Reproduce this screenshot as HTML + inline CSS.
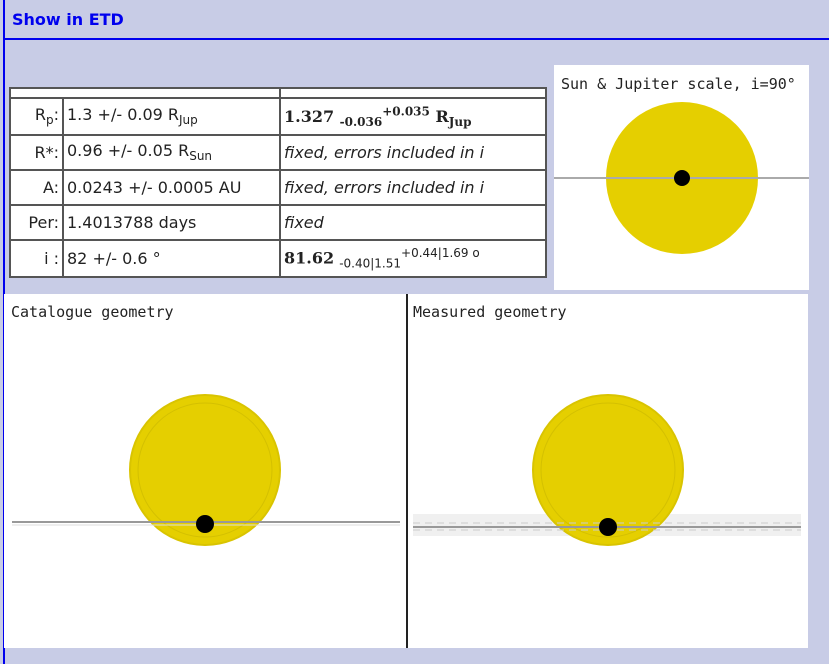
<!DOCTYPE html>
<html><head><style>
body{margin:0;width:829px;height:664px;background:#c8cce6;position:relative;overflow:hidden;font-family:"DejaVu Sans","Liberation Sans",sans-serif;}
.hdr{position:absolute;left:3px;top:0;width:826px;height:38px;border-bottom:2px solid #0000ee;}
.hdr span{position:absolute;left:9px;top:10px;color:#0000ee;font-weight:bold;font-size:16px;}
.lb{position:absolute;left:3px;top:0;width:2px;height:664px;background:#0000ee;}
table{position:absolute;left:9px;top:87px;border-collapse:collapse;border:2px solid #555;font-size:16px;color:#222;background:#fff;}
td{border:2px solid #555;padding:0 3px;height:33px;white-space:nowrap;background:#fff;}
tr.h td{height:8px;padding:0;}
td.l{text-align:right;width:45px;}
td.m{width:209px;}
td.r{width:258px;}
sub,sup{font-size:12px;}
.b{font-weight:bold;font-family:"DejaVu Serif","Liberation Serif",serif;font-size:16px;}
</style></head><body>
<div class="hdr"><span>Show in ETD</span></div>
<div class="lb"></div>
<table>
<tr class="h"><td colspan="2"></td><td></td></tr>
<tr style="height:37px"><td class="l">R<sub>p</sub>:</td><td class="m">1.3 +/- 0.09 R<sub>Jup</sub></td><td class="r"><span class="b">1.327 <sub>-0.036</sub><sup>+0.035</sup> R<sub>Jup</sub></span></td></tr>
<tr><td class="l">R*:</td><td class="m">0.96 +/- 0.05 R<sub>Sun</sub></td><td class="r"><i>fixed, errors included in i</i></td></tr>
<tr style="height:30px"><td class="l" style="height:28px">A:</td><td class="m">0.0243 +/- 0.0005 AU</td><td class="r"><i>fixed, errors included in i</i></td></tr>
<tr><td class="l" style="height:28px">Per:</td><td class="m">1.4013788 days</td><td class="r"><i>fixed</i></td></tr>
<tr><td class="l" style="height:35px">i :</td><td class="m">82 +/- 0.6 °</td><td class="r"><span class="b">81.62</span> <sub>-0.40|1.51</sub><sup>+0.44|1.69 o</sup></td></tr>
</table>
<svg style="position:absolute;left:554px;top:65px" width="255" height="225">
<rect width="255" height="225" fill="#fff"/>
<text x="7" y="24" font-family="DejaVu Sans Mono" font-size="15" fill="#222">Sun &amp; Jupiter scale, i=90°</text>
<circle cx="128" cy="113" r="76" fill="#e5cf00"/>
<line x1="0" y1="113" x2="255" y2="113" stroke="#aaa" stroke-width="2"/>
<circle cx="128" cy="113" r="8" fill="#000"/>
</svg>
<svg style="position:absolute;left:4px;top:294px" width="804" height="354">
<rect width="804" height="354" fill="#fff"/>
<rect x="402" y="0" width="2" height="354" fill="#222"/>
<text x="7" y="23" font-family="DejaVu Sans Mono" font-size="15" fill="#222">Catalogue geometry</text>
<text x="409" y="23" font-family="DejaVu Sans Mono" font-size="15" fill="#222">Measured geometry</text>
<circle cx="201" cy="176" r="75" fill="#e5cf00" stroke="#d9c400" stroke-width="2"/>
<circle cx="201" cy="176" r="67" fill="none" stroke="#d4c000" stroke-width="1"/>
<line x1="8" y1="228" x2="396" y2="228" stroke="#999" stroke-width="2"/>
<line x1="8" y1="231" x2="396" y2="231" stroke="#ddd" stroke-width="1"/>
<circle cx="201" cy="230" r="9" fill="#000"/>
<rect x="409" y="220" width="388" height="22" fill="#f0f0f0"/>
<circle cx="604" cy="176" r="75" fill="#e5cf00" stroke="#d9c400" stroke-width="2"/>
<circle cx="604" cy="176" r="67" fill="none" stroke="#d4c000" stroke-width="1"/>
<line x1="409" y1="229" x2="797" y2="229" stroke="#ccc" stroke-width="1" stroke-dasharray="7,5"/>
<line x1="409" y1="233" x2="797" y2="233" stroke="#999" stroke-width="2"/>
<line x1="409" y1="236" x2="797" y2="236" stroke="#ccc" stroke-width="1" stroke-dasharray="7,5"/>
<circle cx="604" cy="233" r="9" fill="#000"/>
</svg>
</body></html>
